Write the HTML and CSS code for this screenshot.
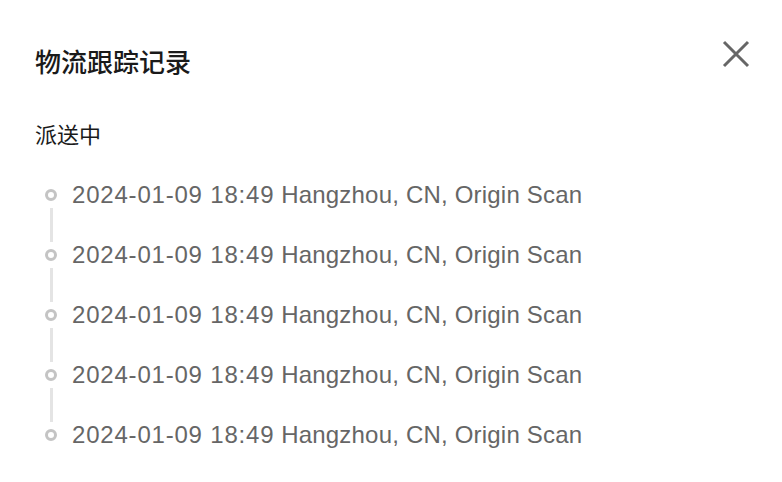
FILE: index.html
```html
<!DOCTYPE html>
<html lang="zh-CN">
<head>
<meta charset="utf-8">
<link rel="stylesheet" href="styles.css">
</head>
<body>
<div class="dialog">
  <div class="header">
    <h1 class="title">物流跟踪记录</h1>
    <button class="close" aria-label="close">
      <svg width="28" height="28" viewBox="0 0 28 28"><path d="M2 2 L26 26 M26 2 L2 26" stroke="#666" stroke-width="3" fill="none"/></svg>
    </button>
  </div>
  <div class="status">派送中</div>
  <ul class="timeline">
    <li class="item"><span class="dot"></span><span class="text"><span class="time">2024-01-09 18:49</span> Hangzhou, CN, Origin Scan</span></li>
    <li class="item"><span class="dot"></span><span class="text"><span class="time">2024-01-09 18:49</span> Hangzhou, CN, Origin Scan</span></li>
    <li class="item"><span class="dot"></span><span class="text"><span class="time">2024-01-09 18:49</span> Hangzhou, CN, Origin Scan</span></li>
    <li class="item"><span class="dot"></span><span class="text"><span class="time">2024-01-09 18:49</span> Hangzhou, CN, Origin Scan</span></li>
    <li class="item last"><span class="dot"></span><span class="text"><span class="time">2024-01-09 18:49</span> Hangzhou, CN, Origin Scan</span></li>
  </ul>
</div>
</body>
</html>
```
FILE: styles.css
```css
* { box-sizing: border-box; }
html, body { margin: 0; padding: 0; background: #fff; }
body { font-family: "Liberation Sans", "Noto Sans CJK SC", sans-serif; color: #1a1a1a; }
.dialog { width: 782px; height: 482px; padding: 36px 32px 0 35px; }
.header { display: flex; justify-content: space-between; align-items: center; height: 48px; }
.title { margin: 0; font-family: "Noto Sans CJK SC", sans-serif; font-size: 26px; font-weight: 500; color: #1a1a1a; }
.close { border: 0; background: none; padding: 0; width: 28px; height: 28px; margin-top: -12px; }
.close svg { display: block; }
.status { margin-top: 34px; font-family: "Noto Sans CJK SC", sans-serif; font-size: 22px; color: #1a1a1a; line-height: 30px; }
.timeline { list-style: none; margin: 25px 0 0 0; padding: 0; }
.item { position: relative; display: flex; align-items: center; height: 60px; }
.item:first-child { margin-top: -8px; }
.dot { width: 12px; height: 12px; border: 3px solid #c4c4c4; border-radius: 50%; margin-left: 10px; margin-right: 15px; flex: none; }
.item::after { content: ""; position: absolute; left: 15px; top: 43px; width: 3px; height: 34px; background: #e4e4e4; }
.item.last::after { display: none; }
.text { font-size: 24px; letter-spacing: 0.2px; color: #666; white-space: nowrap; }
.time { letter-spacing: 0.8px; }
```
